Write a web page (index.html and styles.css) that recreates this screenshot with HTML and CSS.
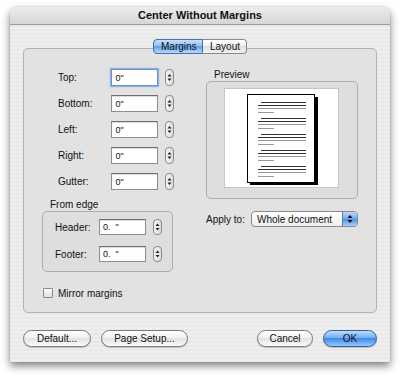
FILE: index.html
```html
<!DOCTYPE html>
<html lang="en">
<head>
    <meta charset="UTF-8">
    <title>Center Without Margins</title>
    <link rel="stylesheet" href="styles.css">
</head>
<body>

    <div class="window">
        <div class="titlebar">Center Without Margins</div>

        <div class="content">
            <div class="tabs">
                <span class="tab active">Margins</span>
                <span class="tab">Layout</span>
            </div>

            <div class="panel">
                <div class="col-left">
                    <div class="fields">
                        <div class="row">
                            <span class="label">Top:</span>
                            <span class="input focused">0"</span>
                            <span class="stepper"><svg width="9" height="17" viewBox="0 0 9 17"><path d="M4.5 5 L6.5 7.5 H2.5 Z M4.5 12 L6.5 9.5 H2.5 Z" fill="#222"/></svg></span>
                        </div>
                        <div class="row">
                            <span class="label">Bottom:</span>
                            <span class="input">0"</span>
                            <span class="stepper"><svg width="9" height="17" viewBox="0 0 9 17"><path d="M4.5 5 L6.5 7.5 H2.5 Z M4.5 12 L6.5 9.5 H2.5 Z" fill="#222"/></svg></span>
                        </div>
                        <div class="row">
                            <span class="label">Left:</span>
                            <span class="input">0"</span>
                            <span class="stepper"><svg width="9" height="17" viewBox="0 0 9 17"><path d="M4.5 5 L6.5 7.5 H2.5 Z M4.5 12 L6.5 9.5 H2.5 Z" fill="#222"/></svg></span>
                        </div>
                        <div class="row">
                            <span class="label">Right:</span>
                            <span class="input">0"</span>
                            <span class="stepper"><svg width="9" height="17" viewBox="0 0 9 17"><path d="M4.5 5 L6.5 7.5 H2.5 Z M4.5 12 L6.5 9.5 H2.5 Z" fill="#222"/></svg></span>
                        </div>
                        <div class="row">
                            <span class="label">Gutter:</span>
                            <span class="input">0"</span>
                            <span class="stepper"><svg width="9" height="17" viewBox="0 0 9 17"><path d="M4.5 5 L6.5 7.5 H2.5 Z M4.5 12 L6.5 9.5 H2.5 Z" fill="#222"/></svg></span>
                        </div>
                    </div>

                    <div class="group-label edge-label">From edge</div>
                    <div class="group edge-group">
                        <div class="row">
                            <span class="label">Header:</span>
                            <span class="input">0.&nbsp;&nbsp;"</span>
                            <span class="stepper"><svg width="9" height="16" viewBox="0 0 9 16"><path d="M4.5 4.5 L6.5 7 H2.5 Z M4.5 11.5 L6.5 9 H2.5 Z" fill="#222"/></svg></span>
                        </div>
                        <div class="row">
                            <span class="label">Footer:</span>
                            <span class="input">0.&nbsp;&nbsp;"</span>
                            <span class="stepper"><svg width="9" height="16" viewBox="0 0 9 16"><path d="M4.5 4.5 L6.5 7 H2.5 Z M4.5 11.5 L6.5 9 H2.5 Z" fill="#222"/></svg></span>
                        </div>
                    </div>

                    <div class="check">
                        <span class="box"></span>
                        <span>Mirror margins</span>
                    </div>
                </div>

                <div class="col-right">
                    <div class="group-label">Preview</div>
                    <div class="group preview-group">
                        <div class="preview">
                            <svg width="72" height="92" viewBox="0 0 72 92">
                                <rect x="3" y="3" width="68" height="88" fill="#000"/>
                                <rect x="0.5" y="0.5" width="67" height="88" fill="#fff" stroke="#000"/>
                                <g id="para">
                                    <rect x="14" y="8" width="45" height="1" fill="#333"/>
                                    <rect x="11" y="11" width="48" height="1" fill="#333"/>
                                    <rect x="11" y="14" width="48" height="1" fill="#999"/>
                                    <rect x="11" y="18" width="16" height="1" fill="#999"/>
                                </g>
                                <use href="#para" y="16"/>
                                <use href="#para" y="32"/>
                                <use href="#para" y="48"/>
                                <use href="#para" y="64"/>
                            </svg>
                        </div>
                    </div>

                    <div class="apply">
                        <span class="apply-label">Apply to:</span>
                        <div class="popup">
                            <span class="popup-text">Whole document</span>
                            <span class="popup-arrows"><svg width="14" height="14" viewBox="0 0 14 14"><path d="M7 3 L9.5 6 H4.5 Z M7 11 L9.5 8 H4.5 Z" fill="#111"/></svg></span>
                        </div>
                    </div>
                </div>
            </div>

            <div class="buttons">
                <button class="button default-btn">Default...</button>
                <button class="button setup-btn">Page Setup...</button>
                <button class="button cancel-btn">Cancel</button>
                <button class="button ok-btn">OK</button>
            </div>
        </div>
    </div>

</body>
</html>
```

FILE: styles.css
```css
body {
    margin: 0;
    width: 400px;
    height: 375px;
    background: #fff;
    font-family: 'Liberation Sans', Arial, sans-serif;
    font-size: 10px;
    color: #111;
    overflow: hidden;
}

.window {
    margin: 7px 0 0 10px;
    width: 380px;
    height: 355px;
    border-radius: 6px 6px 0 0;
    background: repeating-linear-gradient(to bottom, #efefef 0, #efefef 2px, #e9e9e9 2px, #e9e9e9 4px);
    box-shadow: 0 4px 9px rgba(0, 0, 0, 0.5), 0 0 1px rgba(0, 0, 0, 0.4);
    overflow: hidden;
}

.titlebar {
    height: 17px;
    line-height: 17px;
    text-align: center;
    font-weight: bold;
    font-size: 11px;
    background: linear-gradient(to bottom, #ececec, #d6d6d6);
    border-bottom: 1px solid #9c9c9c;
    color: #111;
}

.content {
    padding: 14px 13px 0 13px;
}

/* Tabs */
.tabs {
    display: flex;
    justify-content: center;
    position: relative;
    z-index: 1;
    height: 15px;
}

.tab {
    height: 13px;
    line-height: 13px;
    padding: 0 7px;
    border: 1px solid #8a8a8a;
    background: linear-gradient(to bottom, #ffffff, #eeeeee 50%, #dedede 50%, #f2f2f2);
    font-size: 10px;
}

.tab.active {
    width: 34px;
    border-radius: 4px 0 0 4px;
    border-color: #4a6ea8;
    background: linear-gradient(to bottom, #c8e0fa, #8ebcf0 50%, #5f9de8 50%, #b7dcfb);
}

.tab:last-child {
    width: 29px;
    border-left: none;
    border-radius: 0 4px 4px 0;
}

/* Panel */
.panel {
    margin-top: -6px;
    height: 263px;
    border: 1px solid #b2b2b2;
    border-radius: 5px;
    background: #e2e2e2;
    display: flex;
}

.col-left {
    width: 132px;
    padding-left: 18px;
}

.fields {
    padding-top: 20px;
    padding-left: 16px;
    display: flex;
    flex-direction: column;
    gap: 9px;
}

.row {
    display: flex;
    align-items: center;
    height: 17px;
}

.row .label {
    width: 54px;
}

.input {
    width: 42px;
    height: 15px;
    line-height: 16px;
    padding-left: 3px;
    border: 1px solid #8e8e8e;
    border-top-color: #6e6e6e;
    background: #fff;
    box-shadow: inset 0 1px 1px rgba(0, 0, 0, 0.15);
    font-size: 9px;
}

.input.focused {
    box-shadow: 0 0 0 1px #8db2e3, 0 0 2px 1px #a8c6ee;
    border-color: #6f8fc0;
}

.stepper {
    margin-left: 7px;
    width: 9px;
    height: 17px;
    box-sizing: border-box;
    border: 1px solid #8a8a8a;
    border-radius: 4px;
    background: linear-gradient(to right, #f6f6f6, #dcdcdc);
    display: flex;
    align-items: center;
    justify-content: center;
}

.stepper svg {
    display: block;
    flex-shrink: 0;
}

.group-label {
    height: 12px;
    line-height: 12px;
}

.edge-label {
    margin-top: 9px;
    padding-left: 8px;
}

.group {
    border: 1px solid #adadad;
    border-radius: 5px;
    background: #dedede;
}

.edge-group {
    width: 129px;
    height: 52px;
    padding-top: 7px;
    display: flex;
    flex-direction: column;
    gap: 11px;
}

.edge-group .row {
    height: 16px;
    padding-left: 12px;
}

.edge-group .label {
    width: 44px;
}

.edge-group .input {
    height: 14px;
    line-height: 15px;
}

.edge-group .stepper {
    height: 16px;
}

.check {
    margin-top: 16px;
    padding-left: 1px;
    display: flex;
    align-items: center;
    gap: 5px;
    height: 10px;
}

.check .box {
    width: 8px;
    height: 8px;
    border: 1px solid #888;
    border-radius: 1px;
    background: linear-gradient(to bottom, #fbfbfb, #dedede);
}

/* Right column */
.col-right {
    margin-left: 32px;
    width: 152px;
    padding-top: 20px;
}

.col-right .group-label {
    padding-left: 8px;
}

.preview-group {
    height: 110px;
    padding: 6px 18px 0 17px;
}

.preview {
    width: 115px;
    height: 100px;
    background: #fff;
    border: 1px solid #c6c6c6;
    box-sizing: border-box;
    padding: 5px 0 0 22px;
}

.preview svg {
    display: block;
}

.apply {
    margin-top: 12px;
    display: flex;
    align-items: center;
}

.apply-label {
    width: 45px;
    white-space: nowrap;
    flex-shrink: 0;
}

.popup {
    flex-shrink: 0;
    width: 105px;
    height: 14px;
    border: 1px solid #8a8a8a;
    border-radius: 4px;
    background: linear-gradient(to bottom, #ffffff, #eeeeee);
    display: flex;
    align-items: center;
    overflow: hidden;
}

.popup-text {
    flex: 1;
    padding-left: 5px;
    white-space: nowrap;
}

.popup-arrows {
    width: 14px;
    height: 14px;
    border-left: 1px solid #5a7cb5;
    background: linear-gradient(to bottom, #bcdafa, #6ea8ec 50%, #4f8fe2 50%, #a5d0fa);
}

.popup-arrows svg {
    display: block;
}

/* Buttons */
.buttons {
    margin-top: 17px;
    display: flex;
    align-items: center;
}

.button {
    height: 17px;
    padding: 0;
    border: 1px solid #7a7a7a;
    border-radius: 9px;
    background: linear-gradient(to bottom, #ffffff, #f0f0f0 50%, #e2e2e2 50%, #fbfbfb);
    font-family: 'Liberation Sans', Arial, sans-serif;
    font-size: 10px;
    color: #111;
    box-shadow: 0 1px 1px rgba(0, 0, 0, 0.2);
}

.default-btn {
    width: 68px;
}

.setup-btn {
    width: 87px;
    margin-left: 10px;
}

.cancel-btn {
    width: 56px;
    margin-left: auto;
}

.ok-btn {
    width: 54px;
    margin-left: 10px;
    border-color: #3a5a96;
    background: linear-gradient(to bottom, #bcdcfc, #6aa9f0 50%, #3d8ae8 50%, #92cbfb);
}
```
